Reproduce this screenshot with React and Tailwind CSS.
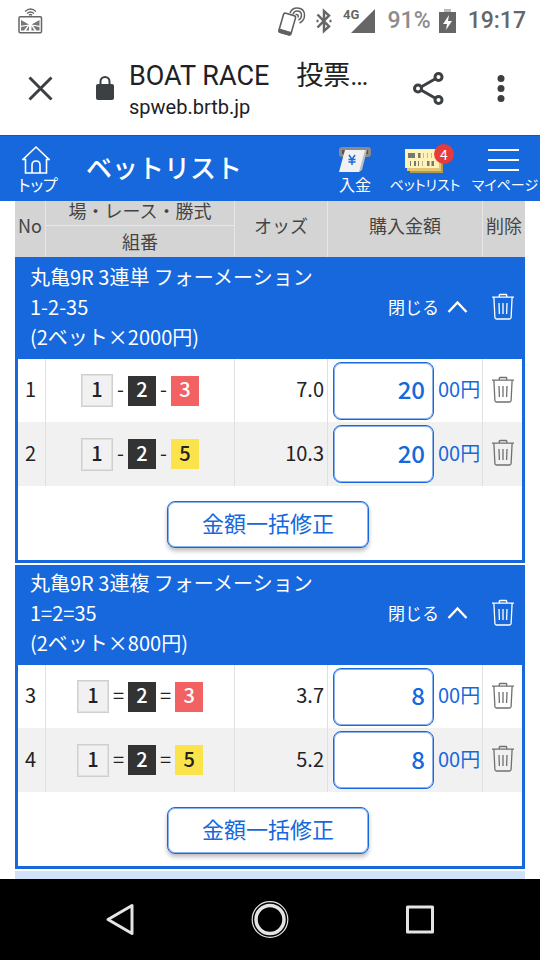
import React from "react";

const JP = "font-['Noto_Sans_CJK_JP',sans-serif]";

const groups = [
  {
    id: "trifecta",
    title: "丸亀9R 3連単 フォーメーション",
    combo: "1-2-35",
    total: "(2ベット×2000円)",
    mark: "-",
    first: true,
    rows: [
      { no: 1, picks: [1, 2, 3], odds: "7.0", amount: "20" },
      { no: 2, picks: [1, 2, 5], odds: "10.3", amount: "20" },
    ],
  },
  {
    id: "trio",
    title: "丸亀9R 3連複 フォーメーション",
    combo: "1=2=35",
    total: "(2ベット×800円)",
    mark: "=",
    first: false,
    rows: [
      { no: 3, picks: [1, 2, 3], odds: "3.7", amount: "8" },
      { no: 4, picks: [1, 2, 5], odds: "5.2", amount: "8" },
    ],
  },
];

const boatStyle = {
  1: "h-[33px] w-8 border border-[#cfcfcf] ring-1 ring-inset ring-[#e0e0e0] bg-[#f1f1f1] text-[#222]",
  2: "h-[30px] w-7 bg-[#333] text-white",
  3: "h-[30px] w-7 bg-[#f26262] text-white",
  5: "h-[30px] w-7 bg-[#fbe34b] text-[#222]",
};

function TrashIcon() {
  return (
    <svg width="24" height="28" viewBox="0 0 24 28" fill="none" stroke="currentColor" strokeWidth="1.3" aria-hidden="true">
      <path d="M1 4.2h22M8.300 4V2.200q0-.7.7-.7h6q.7 0 .7.7V4M2.900 4.500l1 20q.1 1.500 1.600 1.500h13q1.500 0 1.600-1.500l1-20" />
      <path d="M8 10l.4 11M12 10v11M16 10l-.4 11" />
    </svg>
  );
}

function StatusBar() {
  return (
    <div className="flex h-[42px] items-center justify-between pl-[18px] pr-[14px] font-[Roboto,sans-serif] text-[#666]">
      <svg width="25" height="28" viewBox="0 0 25 28" fill="none" stroke="#666" aria-hidden="true">
        <path d="M7 4.500q5.500-5 11 0M9 6.500q3.500-3 7 0" strokeWidth="1.300" />
        <path d="M11 8.300q1.500-1.500 3 0" strokeWidth="1.500" />
        <rect x="1" y="9.700" width="22.500" height="16" rx="1.200" strokeWidth="1.500" />
        <path d="M3 13l8 4.500-8 1.200zM21.500 13l-8 4.500 8 1.200zM3 20l6.500-1.200-3.500 4.700H3zM21.500 20L15 18.800l3.500 4.700h3zM8 23.500l3-4.500v4.500zM16.500 23.500l-3-4.500v4.500z" fill="#777" stroke="none" />
      </svg>
      <div className="flex items-center">
        <svg width="30" height="30" viewBox="0 0 30 30" fill="none" stroke="#606060" aria-hidden="true">
          <path d="M13 7q2-5 7-5 7.500 0 7.500 7.500 0 5-5 7.500M16 8q1-3 4-3 4.500 0 4.500 4.500 0 3-3 4.500M18.500 8.500q3.500-.5 2.500 3" strokeWidth="1.500" />
          <g transform="rotate(16 10 18)">
            <rect x="4" y="8" width="12.500" height="20" rx="2" strokeWidth="1.600" fill="#fff" />
            <path d="M4 25h12.500v1.500q0 1.500-1.500 1.500H5.500Q4 28 4 26.500z" fill="#606060" />
          </g>
        </svg>
        <svg className="ml-[9px]" width="16" height="26" viewBox="0 0 16 26" fill="none" stroke="#666" strokeWidth="2.500" aria-hidden="true">
          <path d="M1.500 6.500l11.500 12-5 4.500V3l5 4.500-11.500 12" />
          <path d="M.5 13h2M13.500 13h2" />
        </svg>
        <svg className="ml-[11px]" width="33" height="26" viewBox="0 0 33 26" aria-hidden="true">
          <path d="M8 25L32 1v24z" fill="#666" />
          <path d="M0 0h18v14H0z" fill="#fff" />
          <text x="0" y="11" fontSize="13" fontWeight="700" fontFamily="Roboto" fill="#666">4G</text>
        </svg>
        <span className="ml-3 text-[23px] font-medium text-[#8c8c8c]">91%</span>
        <svg className="ml-2" width="17" height="26" viewBox="0 0 17 26" aria-hidden="true">
          <path d="M5 1h7v3H5z" fill="#bbb" />
          <path d="M0 4h17v21H0z" fill="#666" />
          <path d="M10 7L4 16h4l-1 6 6-9H9z" fill="#fff" />
        </svg>
        <span className="ml-3 text-[23px] font-medium">19:17</span>
      </div>
    </div>
  );
}

function BrowserBar() {
  return (
    <div className="flex h-[93px] items-center pr-[34px] text-[#202124]">
      <button type="button" aria-label="閉じる" className="ml-7 flex">
        <svg width="25" height="25" viewBox="0 0 25 25" stroke="#3c4043" strokeWidth="3" aria-hidden="true">
          <path d="M1.500 1.500l22 22M23.500 1.500l-22 22" />
        </svg>
      </button>
      <svg className="ml-[42px]" width="20" height="26" viewBox="0 0 20 26" aria-hidden="true">
        <rect x="1" y="8" width="18" height="16" rx="2" fill="#3c4043" />
        <path d="M5.500 9V5.500a4.500 4.500 0 019 0V9" fill="none" stroke="#3c4043" strokeWidth="2" />
      </svg>
      <div className="ml-[14px] min-w-0 flex-1 pt-[2px] font-[Roboto,'Noto_Sans_CJK_JP',sans-serif]">
        <div className="whitespace-nowrap text-[27px] leading-[34px]">BOAT RACE　投票…</div>
        <div className="text-[20px] leading-7">spweb.brtb.jp</div>
      </div>
      <button type="button" aria-label="共有" className="flex">
        <svg width="32" height="36" viewBox="0 0 32 36" fill="none" stroke="#3c4043" strokeWidth="3" aria-hidden="true">
          <path d="M9 16L23 8M9 19L23 27" />
          <circle cx="6" cy="17.500" r="3.500" />
          <circle cx="26.500" cy="6" r="3.500" />
          <circle cx="26.500" cy="29" r="3.500" />
        </svg>
      </button>
      <button type="button" aria-label="メニュー" className="ml-[52px] flex">
        <svg width="10" height="28" viewBox="0 0 10 28" fill="#3c4043" aria-hidden="true">
          <circle cx="5" cy="3.500" r="3.500" />
          <circle cx="5" cy="13.500" r="3.500" />
          <circle cx="5" cy="23.500" r="3.500" />
        </svg>
      </button>
    </div>
  );
}

function NavItem({ label, width, text, children }) {
  return (
    <a href="#" className={`flex shrink-0 flex-col items-center ${width}`}>
      <span className="flex h-[30px] items-center">{children}</span>
      <span className={`whitespace-nowrap leading-[18px] [font-feature-settings:'palt'] ${text}`}>{label}</span>
    </a>
  );
}

function AppBar() {
  return (
    <header className="flex h-[66px] items-start border-t border-[#1156b8] bg-[#1668dc] pt-[9px] text-white">
      <NavItem label="トップ" width="ml-2 w-[60px]" text="text-[16px]">
        <svg className="mr-1" width="28" height="30" viewBox="0 0 28 30" fill="none" stroke="#fff" strokeWidth="1.600" aria-hidden="true">
          <path d="M3.500 14.500H1L14 2l13 12.500h-2.500V28h-21zM10 28v-8q0-4 4-4t4 4v8" />
        </svg>
      </NavItem>
      <h1 className="ml-[18px] flex-1 whitespace-nowrap text-[26px] font-medium leading-[44px]">ベットリスト</h1>
      <NavItem label="入金" width="w-[50px]" text="text-[16px]">
        <svg width="34" height="28" viewBox="0 0 34 28" aria-hidden="true">
          <rect x="1" y="1" width="32" height="10" rx="3" fill="#8b8b8b" />
          <rect x="4" y="4" width="26" height="4" fill="#555" />
          <path d="M25 4h4l-5 20-3 2h-4z" fill="#bdbdbd" />
          <path d="M7 4h20l-6 22H1z" fill="#f1f1f1" />
          <path d="M11 9l3 4.500L17 9M10.500 13.500h7M10.500 16h7M14 13.500V19" fill="none" stroke="#1668dc" strokeWidth="1.500" />
        </svg>
      </NavItem>
      <NavItem label="ベットリスト" width="w-[90px]" text="text-[14px]">
        <span className="relative flex">
          <svg width="42" height="28" viewBox="0 0 42 28" aria-hidden="true">
            <path d="M6 10h33v17H6z" fill="#b59a4b" />
            <path d="M3 8h34v17H3z" fill="#dfc574" />
            <path d="M1 3h34v19H1z" fill="#fff2b6" />
            <path d="M4 7h7v5H4zM14 7h2.500v5H14z" fill="#777" />
            <path d="M6 15h1v5H6zM10 15h2v5h-2zM14 15h1v5h-1zM23 15h2.500v5H23zM27.500 15h2.500v5h-2.500z" fill="#777" />
            <path d="M19 7h1v5h-1zM23 7h1v5h-1zM27 7h1v5h-1zM18 15h1v5h-1z" fill="#c4b98e" />
          </svg>
          <span className="absolute -right-2 -top-[2px] flex h-5 w-5 items-center justify-center rounded-full bg-[#e63b3b] text-[14px] leading-none">4</span>
        </span>
      </NavItem>
      <NavItem label="マイページ" width="w-[70px]" text="text-[14px]">
        <span className="mr-1 flex w-[31px] flex-col gap-2">
          <span className="h-[2px] bg-white" />
          <span className="h-[2px] bg-white" />
          <span className="h-[2px] bg-white" />
        </span>
      </NavItem>
    </header>
  );
}

function Picks({ picks, mark }) {
  return (
    <div className="flex items-center justify-center">
      {picks.map((n, i) => (
        <React.Fragment key={n}>
          {i > 0 && <span className="mx-1 pb-[3px]">{mark}</span>}
          <span className={`flex items-center justify-center pb-[3px] font-medium leading-none ${boatStyle[n]}`}>{n}</span>
        </React.Fragment>
      ))}
    </div>
  );
}

function BetGroup({ group }) {
  const edge = group.first ? "border-[#1668dc]" : "border-white";
  return (
    <tbody>
      <tr className="bg-[#1668dc] text-white">
        <td colSpan={4} className={`h-[102px] border-t-2 pb-[5px] pl-[15px] pr-[15px] ${edge}`}>
          <div className="flex items-center justify-between">
            <div className="whitespace-nowrap text-[20px] leading-[30px]">
              <p>{group.title}</p>
              <p>{group.combo}</p>
              <p>{group.total}</p>
            </div>
            <button type="button" className="-ml-4 flex shrink-0 items-center gap-2 text-[17px]">
              閉じる
              <svg width="21" height="14" viewBox="0 0 21 14" fill="none" stroke="#fff" strokeWidth="2.400" aria-hidden="true">
                <path d="M1.500 12l9-9.500 9 9.500" />
              </svg>
            </button>
          </div>
        </td>
        <td className={`border-t-2 pb-[5px] ${edge}`}>
          <button type="button" aria-label="まとめて削除" className="ml-2 flex">
            <TrashIcon />
          </button>
        </td>
      </tr>
      {group.rows.map((row, i) => (
        <tr key={row.no} className={`text-[20px] leading-[30px] ${i === 0 ? "h-[63px] bg-white" : "h-16 bg-[#f1f1f1]"}`}>
          <td className="border-l-[3px] border-r border-l-[#1668dc] border-r-[#e0e0e0] pb-[3px] pr-[2px] text-center">{row.no}</td>
          <td className="border-r border-[#e0e0e0]">
            <Picks picks={row.picks} mark={group.mark} />
          </td>
          <td className="border-r border-[#e0e0e0] pb-[3px] pr-[3px] text-right">{row.odds}</td>
          <td className="border-r border-[#e0e0e0] pl-[5px]">
            <label className="flex items-center gap-1 whitespace-nowrap text-[#1668dc]">
              <input
                type="text"
                inputMode="numeric"
                defaultValue={row.amount}
                aria-label="購入金額"
                className="h-[58px] w-[101px] shrink-0 rounded-lg border border-[#1668dc] bg-white pb-1 pr-2 text-right text-[24px] font-medium ring-1 ring-inset ring-[#1668dc]/50"
              />
              <span className="pb-[3px]">00円</span>
            </label>
          </td>
          <td className="border-r-[3px] border-[#1668dc] pb-[2px] text-[#707070]">
            <button type="button" aria-label="削除" className="ml-2 flex">
              <TrashIcon />
            </button>
          </td>
        </tr>
      ))}
      <tr className="bg-white">
        <td colSpan={5} className="h-[77px] border-x-[3px] border-b-[3px] border-[#1668dc] pr-1 pt-[2px] text-center">
          <button
            type="button"
            className="h-[47px] w-[202px] rounded-lg border border-[#1668dc] bg-white pb-1 text-[22px] text-[#1668dc] shadow-[0_3px_4px_rgba(0,0,0,0.25)] ring-1 ring-inset ring-[#1668dc]/50"
          >
            金額一括修正
          </button>
        </td>
      </tr>
    </tbody>
  );
}

function SystemNav() {
  return (
    <nav className="flex h-[81px] shrink-0 items-center justify-center gap-[110px] bg-black">
      <button type="button" aria-label="戻る">
        <svg width="40" height="40" viewBox="0 0 40 40" fill="none" stroke="#e4e4e4" strokeWidth="3" strokeLinejoin="round" aria-hidden="true">
          <path d="M32 5.500v28L8 19.500z" />
        </svg>
      </button>
      <button type="button" aria-label="ホーム">
        <svg width="40" height="40" viewBox="0 0 40 40" fill="none" stroke="#e4e4e4" aria-hidden="true">
          <circle cx="20" cy="19.500" r="17.800" strokeWidth="1.200" />
          <circle cx="20" cy="19.500" r="14" strokeWidth="3.500" />
        </svg>
      </button>
      <button type="button" aria-label="アプリ履歴">
        <svg width="40" height="40" viewBox="0 0 40 40" fill="none" stroke="#e4e4e4" strokeWidth="3" strokeLinejoin="round" aria-hidden="true">
          <rect x="7.500" y="7" width="25" height="25" />
        </svg>
      </button>
    </nav>
  );
}

export default function App() {
  return (
    <div className={`flex h-screen flex-col bg-white text-[#222] ${JP}`}>
      <StatusBar />
      <BrowserBar />
      <AppBar />
      <main className="min-h-0 flex-1 overflow-hidden px-[15px]">
        <table className="w-full table-fixed border-separate border-spacing-0">
          <colgroup>
            <col className="w-[31px]" />
            <col />
            <col className="w-[93px]" />
            <col className="w-[155px]" />
            <col className="w-[42px]" />
          </colgroup>
          <thead className="bg-[#d4d4d4] text-[18px] leading-[18px] text-[#444]">
            <tr className="h-[25px]">
              <th rowSpan={2} className="border-r border-[#e6e6e6] pb-2 font-normal">No</th>
              <th className="border-b border-r border-[#e6e6e6] align-top font-normal">場・レース・勝式</th>
              <th rowSpan={2} className="border-r border-[#e6e6e6] pb-2 font-normal">オッズ</th>
              <th rowSpan={2} className="border-r border-[#e6e6e6] pb-2 font-normal">購入金額</th>
              <th rowSpan={2} className="whitespace-nowrap pb-2 font-normal">削除</th>
            </tr>
            <tr className="h-[31px]">
              <th className="border-r border-[#e6e6e6] pb-[2px] font-normal">組番</th>
            </tr>
          </thead>
          {groups.map((g) => (
            <BetGroup key={g.id} group={g} />
          ))}
        </table>
        <div className="mt-[2px] h-20 bg-[#d1e1f8]" />
      </main>
      <SystemNav />
    </div>
  );
}
